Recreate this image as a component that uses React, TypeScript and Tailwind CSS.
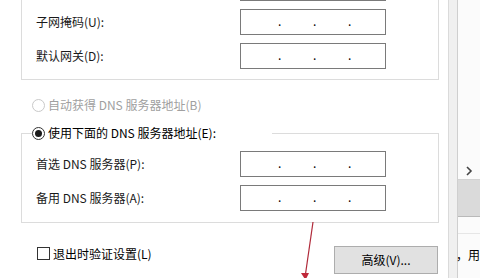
import React from "react";

const font = "font-['Noto_Sans_CJK_SC','Noto_Sans',sans-serif]";

function IpField({ dots = true }: { dots?: boolean }) {
  return (
    <div className="flex h-[26px] w-[146px] items-center border border-[#7a7a7a] bg-white pl-[37px] text-[12px] leading-none text-black">
      {dots && (
        <>
          <span className="w-[35px] translate-y-[-1px]">.</span>
          <span className="w-[35px] translate-y-[-1px]">.</span>
          <span className="w-[35px] translate-y-[-1px]">.</span>
        </>
      )}
    </div>
  );
}

function FieldRow({ label, dots = true }: { label: string; dots?: boolean }) {
  return (
    <div className="flex h-[26px] items-center">
      <span className="w-[208px] pl-[4px] text-[12px] leading-[16px] text-[#1a1a1a]">{label}</span>
      <IpField dots={dots} />
    </div>
  );
}

export default function App() {
  return (
    <div className={`relative flex h-[278px] w-[480px] overflow-hidden bg-white ${font}`}>
      {/* Dialog body */}
      <div className="flex w-[452px] flex-col pl-[21px]">
        {/* IP group (top cut off by the crop) */}
        <div className="-mt-[25px] flex w-[418px] flex-col gap-[8px] border-x border-b border-[#dcdcdc] px-[10px] pb-[10px]">
          <FieldRow label="" dots={false} />
          <FieldRow label="子网掩码(U):" />
          <FieldRow label="默认网关(D):" />
        </div>

        {/* Auto DNS radio (disabled) */}
        <div className="mt-[17px] flex h-[16px] items-center pl-[11px]">
          <span className="h-[13px] w-[13px] rounded-full border border-[#c9c9c9] bg-white" />
          <span className="ml-[3px] text-[12px] leading-[16px] text-[#a0a0a0]">自动获得 DNS 服务器地址(B)</span>
        </div>

        {/* Manual DNS group */}
        <fieldset className="mt-[12px] w-[418px] border border-[#dcdcdc] px-[10px] pb-[11px]">
          <legend className="flex h-[16px] w-[240px] items-center">
            <span className="flex h-[13px] w-[13px] items-center justify-center rounded-full border border-[#333333] bg-white">
              <span className="h-[7px] w-[7px] rounded-full bg-[#1a1a1a]" />
            </span>
            <span className="ml-[3px] text-[12px] leading-[16px] text-black">使用下面的 DNS 服务器地址(E):</span>
          </legend>
          <div className="mt-[10px] flex flex-col gap-[8px]">
            <FieldRow label="首选 DNS 服务器(P):" />
            <FieldRow label="备用 DNS 服务器(A):" />
          </div>
        </fieldset>

        {/* Bottom row */}
        <div className="mt-[23px] flex w-[417px] items-start justify-between">
          <div className="mt-[1px] flex items-start pl-[16px]">
            <span className="h-[13px] w-[13px] border border-[#333333] bg-white" />
            <span className="-mt-[1px] ml-[3px] text-[12px] leading-[16px] text-black">退出时验证设置(L)</span>
          </div>
          <button className="flex h-[28px] w-[104px] items-center justify-center border border-[#adadad] bg-[#e1e1e1] text-[12px] leading-[16px] text-black">
            高级(V)...
          </button>
        </div>
      </div>

      {/* Window edge */}
      <div className="w-[10px] border-x border-l-[#dadada] border-r-[#cfcfcf] bg-[#f0f0f0]" />

      {/* Background window */}
      <div className="flex flex-1 flex-col bg-[#fbfbfb]">
        <div className="h-[162px]" />
        <div className="flex h-[18px] items-center border-b border-[#d2d2d2] pl-[8px]">
          <svg width="7" height="10" viewBox="0 0 7 10">
            <path d="M1 1l4 4-4 4" fill="none" stroke="#444" strokeWidth="1.6" />
          </svg>
        </div>
        <div className="h-[37px] border-b border-[#b9b9b9] bg-[#dadada]" />
        <div className="h-[17px] border-b border-[#e6e6e6]" />
        <div className="mt-[13px] -ml-[2px] whitespace-nowrap text-[12px] leading-[16px] text-black">，用</div>
      </div>

      {/* Red annotation arrow */}
      <svg className="pointer-events-none absolute left-0 top-0" width="480" height="278" viewBox="0 0 480 278">
        <line x1="313" y1="222" x2="305.5" y2="274" stroke="#b02a3a" strokeWidth="1.2" />
        <path d="M301 273l4.5 7 3.5-7z" fill="#c0283a" />
      </svg>
    </div>
  );
}
